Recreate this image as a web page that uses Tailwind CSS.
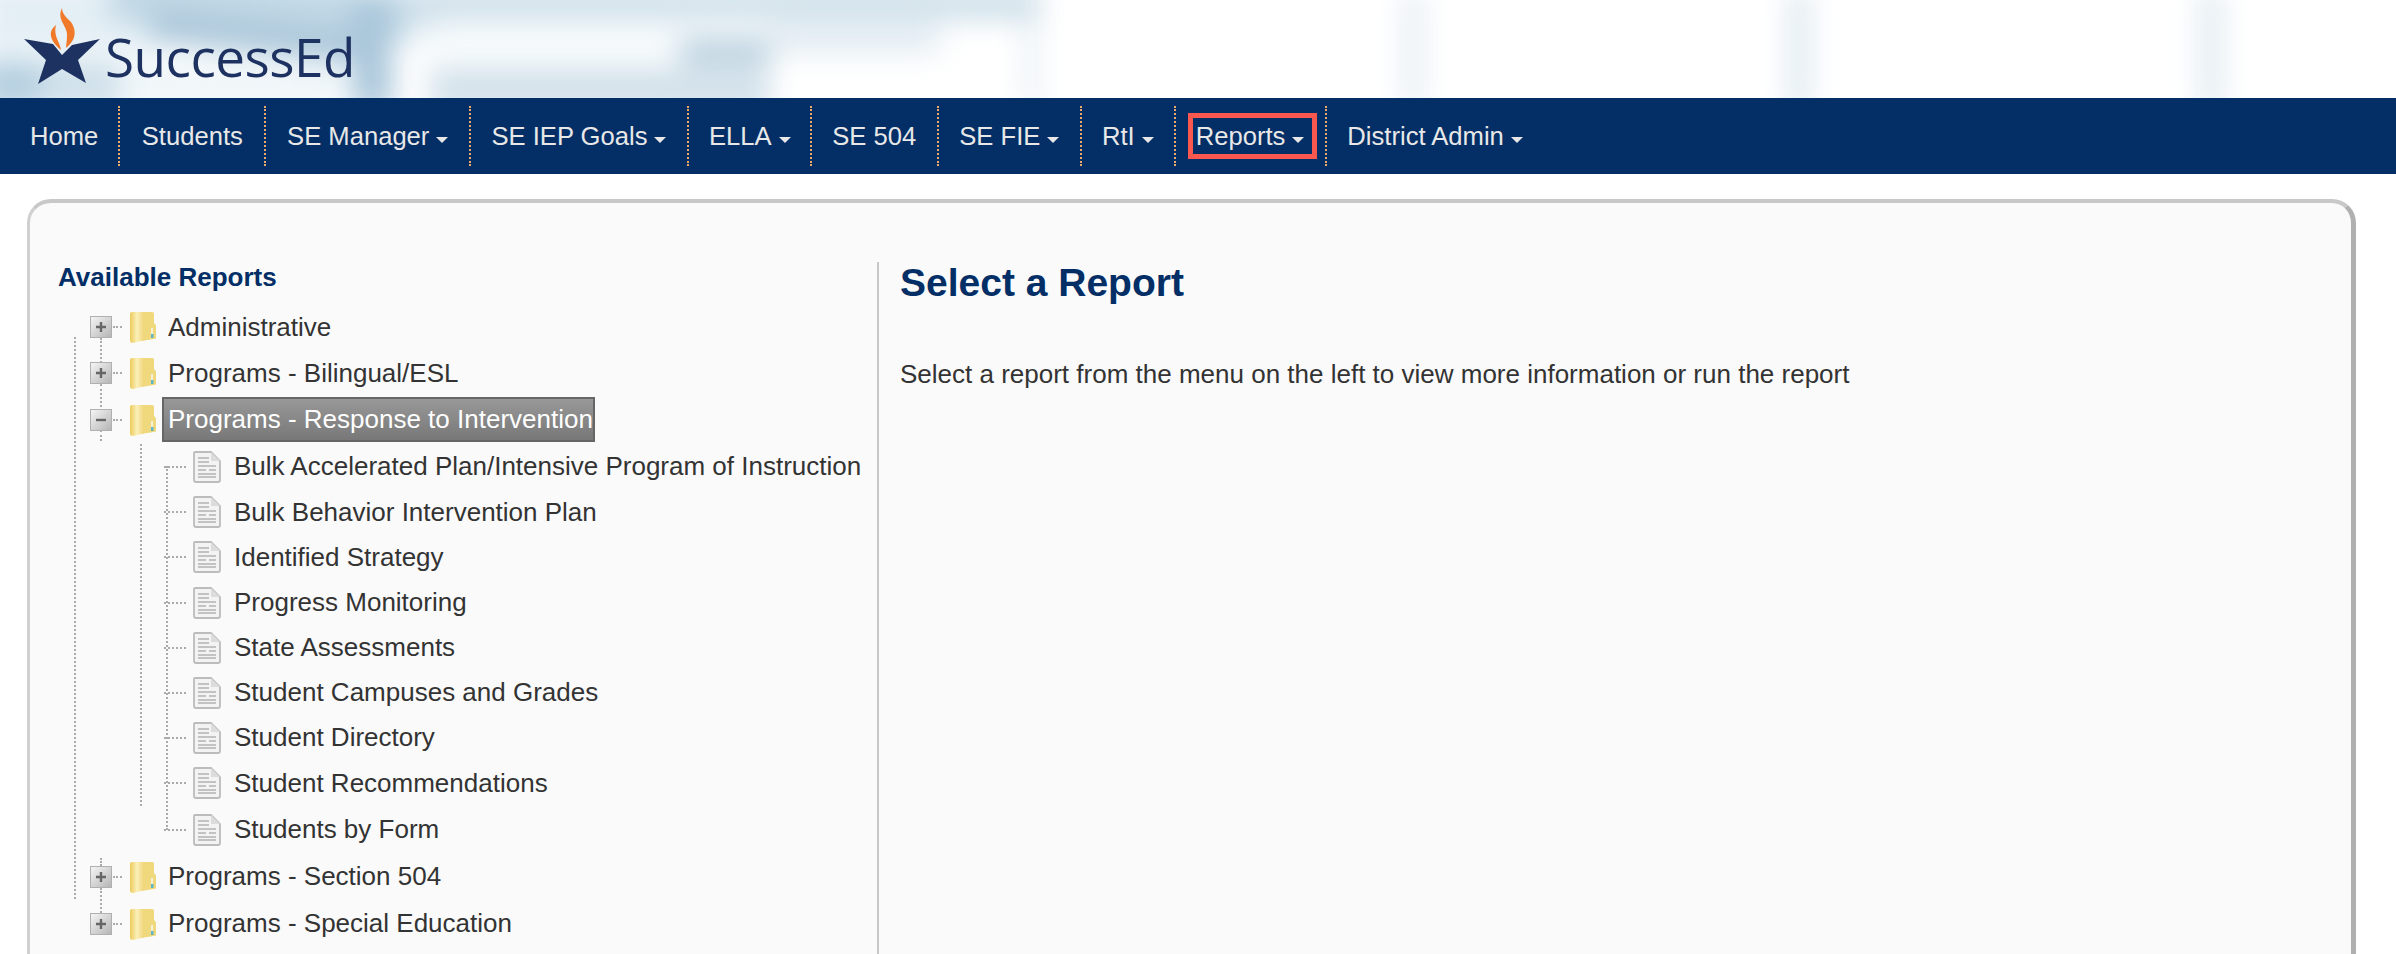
<!DOCTYPE html>
<html lang="en">
<head>
<meta charset="utf-8">
<title>SuccessEd Reports</title>
<script src="https://cdn.jsdelivr.net/npm/@tailwindcss/browser@4"></script>
</head>
<body class="h-screen overflow-hidden bg-white font-['Liberation_Sans',Arial,sans-serif] text-[#333]">
<svg width="0" height="0" class="absolute">
  <defs>
    <linearGradient id="box" x1="0" y1="0" x2="1" y2="1"><stop offset="0" stop-color="#f6f6f6"/><stop offset="1" stop-color="#b4b4b4"/></linearGradient>
    <linearGradient id="fold" x1="0" y1="0" x2="1" y2="0"><stop offset="0" stop-color="#ecca5c"/><stop offset=".5" stop-color="#fbf0b8"/><stop offset="1" stop-color="#f0d478"/></linearGradient>
    <symbol id="plus" viewBox="0 0 22 22"><rect x=".5" y=".5" width="21" height="21" fill="url(#box)" stroke="#b0b0b0"/><path d="M6 11h10M11 6v10" stroke="#666" stroke-width="2.4"/></symbol>
    <symbol id="minus" viewBox="0 0 22 22"><rect x=".5" y=".5" width="21" height="21" fill="url(#box)" stroke="#b0b0b0"/><path d="M6 11h10" stroke="#666" stroke-width="2.4"/></symbol>
    <symbol id="folder" viewBox="0 0 27 32"><path d="M12 1h11q2 0 2 2v9l1 1q1 1 1 2v12q0 1-2 1l-13 2z" fill="#f0d87c"/><path d="M1 3q0-2 2-2h9q3 1 3 5v22q0 2-3 2l-8 2q-3 0-3-3z" fill="url(#fold)"/><rect x="22" y="17" width="2" height="6" fill="#f5f0d8"/><rect x="22" y="23" width="2.5" height="4" fill="#62b4c8"/></symbol>
    <symbol id="doc" viewBox="0 0 28 32"><path d="M2 1h16l9 9v19q0 2-2 2H3q-2 0-2-2V2q0-1 1-1z" fill="#f3f3f3" stroke="#bcbcbc" stroke-width="1.8"/><path d="M18 1v9h9z" fill="#dcdcdc"/><path d="M5 7h11M5 11h11M5 15h18M5 19h8M16 19h7M5 23h18M5 26h18" stroke="#c2c2c2" stroke-width="2"/></symbol>
  </defs>
</svg>

<header class="relative h-[98px] overflow-hidden bg-white">
  <div class="absolute inset-0 blur-[14px]">
    <div class="absolute left-[-20px] top-[-20px] h-[70px] w-[180px] bg-[#e4eff5]"></div>
    <div class="absolute left-[110px] top-[-20px] h-[52px] w-[330px] rotate-[4deg] bg-[#c0d7e5]"></div>
    <div class="absolute left-[150px] top-[26px] h-[26px] w-[230px] rotate-[6deg] bg-[#a6c3d7]"></div>
    <div class="absolute left-[-20px] top-[60px] h-[50px] w-[60px] bg-[#b4cfe0]"></div>
    <div class="absolute left-[40px] top-[60px] h-[50px] w-[90px] bg-[#cfe0ea]"></div>
    <div class="absolute left-[120px] top-[60px] h-[50px] w-[220px] bg-[#f0f6f9]"></div>
    <div class="absolute left-[352px] top-[0px] h-[110px] w-[40px] bg-[#a9c6da]"></div>
    <div class="absolute left-[400px] top-[-14px] h-[34px] w-[640px] bg-[#cfe0ea]"></div>
    <div class="absolute left-[410px] top-[24px] h-[36px] w-[280px] bg-[#f6fafc]"></div>
    <div class="absolute left-[430px] top-[68px] h-[44px] w-[340px] bg-[#d2e1ea]"></div>
    <div class="absolute left-[680px] top-[38px] h-[26px] w-[90px] bg-[#b8cfde]"></div>
    <div class="absolute left-[770px] top-[24px] h-[30px] w-[170px] bg-[#e4edf3]"></div>
    <div class="absolute left-[1024px] top-[20px] h-[90px] w-[14px] bg-[#e6eef3]"></div>
    <div class="absolute left-[1404px] top-[-10px] h-[120px] w-[18px] bg-[#e2ebf2]"></div>
    <div class="absolute left-[1790px] top-[-10px] h-[120px] w-[18px] bg-[#d6e4ec]"></div>
    <div class="absolute left-[2202px] top-[-10px] h-[120px] w-[18px] bg-[#d8e5ed]"></div>
  </div>
  <div class="relative flex h-full items-start">
    <svg class="ml-[20px] mt-[6px] h-[84px] w-[84px] shrink-0 blur-[0.4px]" viewBox="20 8 84 84">
      <path d="M24 41 53 46 62 57 72 47 100 41 78 62 86 85 62 71 38 86 46 62Z" fill="#1e3262"/>
      <path d="M56 27C48 33 49 42 61 52 60 44 53 38 56 27Z" fill="#f07a2a"/>
      <path d="M62 10C56 22 68 28 67 38 67 43 66 47 66 50 76 42 77 33 71 24 67 20 62 16 62 10Z" fill="#f07a2a"/>
    </svg>
    <span class="ml-[1px] mt-[26px] font-['Open_Sans',sans-serif] text-[53px] leading-[62px] tracking-[-0.5px] text-[#1e3262] blur-[0.6px]">SuccessEd</span>
  </div>
</header>

<nav class="flex h-[76px] items-center bg-[#032e66] pl-[10px] text-[25.6px] text-[#e8e8e8]">
  <a class="flex h-[60px] items-center border-r-2 border-dotted border-[#f0a868] pl-[20px] pr-[20px]">Home</a>
  <a class="flex h-[60px] items-center border-r-2 border-dotted border-[#f0a868] px-[21.5px]">Students</a>
  <a class="flex h-[60px] items-center gap-[7px] border-r-2 border-dotted border-[#f0a868] pl-[20.8px] pr-[20.8px]">SE Manager <span class="mt-[8px] h-0 w-0 border-x-[6px] border-t-[6px] border-x-transparent border-t-[#e8e8e8]"></span></a>
  <a class="flex h-[60px] items-center gap-[7px] border-r-2 border-dotted border-[#f0a868] pl-[20.3px] pr-[20.3px]">SE IEP Goals <span class="mt-[8px] h-0 w-0 border-x-[6px] border-t-[6px] border-x-transparent border-t-[#e8e8e8]"></span></a>
  <a class="flex h-[60px] items-center gap-[7px] border-r-2 border-dotted border-[#f0a868] pl-[20.2px] pr-[19.2px]">ELLA <span class="mt-[8px] h-0 w-0 border-x-[6px] border-t-[6px] border-x-transparent border-t-[#e8e8e8]"></span></a>
  <a class="flex h-[60px] items-center border-r-2 border-dotted border-[#f0a868] px-[20.5px]">SE 504</a>
  <a class="flex h-[60px] items-center gap-[7px] border-r-2 border-dotted border-[#f0a868] pl-[20.5px] pr-[20.5px]">SE FIE <span class="mt-[8px] h-0 w-0 border-x-[6px] border-t-[6px] border-x-transparent border-t-[#e8e8e8]"></span></a>
  <a class="flex h-[60px] items-center gap-[7px] border-r-2 border-dotted border-[#f0a868] pl-[20.1px] pr-[20.1px]">RtI <span class="mt-[8px] h-0 w-0 border-x-[6px] border-t-[6px] border-x-transparent border-t-[#e8e8e8]"></span></a>
  <div class="flex h-[60px] items-center border-r-2 border-dotted border-[#f0a868] pl-[12px] pr-[8px]">
    <a class="flex h-[46px] items-center gap-[7px] border-[5px] border-[#f9584f] pl-[3px] pr-[8px]">Reports <span class="mt-[8px] h-0 w-0 border-x-[6px] border-t-[6px] border-x-transparent border-t-[#e8e8e8]"></span></a>
  </div>
  <a class="flex h-[60px] items-center gap-[7px] px-[20px]">District Admin <span class="mt-[8px] h-0 w-0 border-x-[6px] border-t-[6px] border-x-transparent border-t-[#e8e8e8]"></span></a>
</nav>

<main class="ml-[27px] mt-[25px] flex h-[800px] w-[2329px] rounded-[24px] border-t-[4px] border-r-[5px] border-l-[3px] border-t-[#c8c8c8] border-r-[#b0b0b0] border-l-[#d0d0d0] bg-[#fafafa] pt-[59px]">
  <section class="h-full w-[849px] shrink-0 border-r-2 border-[#c8c8c8] pl-[28px]">
    <h2 class="h-[42px] text-[26px] leading-[30px] font-bold text-[#032e66]">Available Reports</h2>
    <div class="relative text-[26px]">
      <!-- tree connector lines -->
      <span class="absolute left-[16px] top-[33px] h-[562px] border-l-2 border-dotted border-[#aaa]"></span>
      <span class="absolute left-[42px] top-[34px] h-[25px] border-l-2 border-dotted border-[#aaa]"></span>
      <span class="absolute left-[42px] top-[80px] h-[23px] border-l-2 border-dotted border-[#aaa]"></span>
      <span class="absolute left-[42px] top-[126px] h-[11px] border-l-2 border-dotted border-[#aaa]"></span>
      <span class="absolute left-[82px] top-[140px] h-[362px] border-l-2 border-dotted border-[#aaa]"></span>
      <span class="absolute left-[108px] top-[162px] h-[364px] border-l-2 border-dotted border-[#aaa]"></span>
      <span class="absolute left-[42px] top-[554px] h-[8px] border-l-2 border-dotted border-[#aaa]"></span>
      <span class="absolute left-[42px] top-[584px] h-[25px] border-l-2 border-dotted border-[#aaa]"></span>

      <div class="flex h-[46px] items-center pl-[32px]"><svg class="h-[22px] w-[22px] blur-[0.3px]"><use href="#plus"/></svg><span class="ml-[1px] w-[9px] border-t-2 border-dotted border-[#aaa]"></span><svg class="ml-[7px] h-[32px] w-[27px] blur-[0.4px]"><use href="#folder"/></svg><span class="ml-[12px]">Administrative</span></div>
      <div class="flex h-[46px] items-center pl-[32px]"><svg class="h-[22px] w-[22px] blur-[0.3px]"><use href="#plus"/></svg><span class="ml-[1px] w-[9px] border-t-2 border-dotted border-[#aaa]"></span><svg class="ml-[7px] h-[32px] w-[27px] blur-[0.4px]"><use href="#folder"/></svg><span class="ml-[12px]">Programs - Bilingual/ESL</span></div>
      <div class="flex h-[47px] items-center pl-[32px]"><svg class="h-[22px] w-[22px] blur-[0.3px]"><use href="#minus"/></svg><span class="ml-[1px] w-[9px] border-t-2 border-dotted border-[#aaa]"></span><svg class="ml-[7px] h-[32px] w-[27px] blur-[0.4px]"><use href="#folder"/></svg><span class="ml-[6px] flex h-[45px] w-[433px] items-center whitespace-nowrap border-2 border-[#666] bg-linear-to-b from-[#989898] to-[#787878] pl-[4px] text-white">Programs - Response to Intervention</span></div>

      <div class="flex h-[47px] items-center pl-[106px]"><span class="w-[22px] border-t-2 border-dotted border-[#aaa]"></span><svg class="ml-[7px] h-[32px] w-[28px] blur-[0.4px]"><use href="#doc"/></svg><span class="ml-[13px]">Bulk Accelerated Plan/Intensive Program of Instruction</span></div>
      <div class="flex h-[44px] items-center pl-[106px]"><span class="w-[22px] border-t-2 border-dotted border-[#aaa]"></span><svg class="ml-[7px] h-[32px] w-[28px] blur-[0.4px]"><use href="#doc"/></svg><span class="ml-[13px]">Bulk Behavior Intervention Plan</span></div>
      <div class="flex h-[46px] items-center pl-[106px]"><span class="w-[22px] border-t-2 border-dotted border-[#aaa]"></span><svg class="ml-[7px] h-[32px] w-[28px] blur-[0.4px]"><use href="#doc"/></svg><span class="ml-[13px]">Identified Strategy</span></div>
      <div class="flex h-[45px] items-center pl-[106px]"><span class="w-[22px] border-t-2 border-dotted border-[#aaa]"></span><svg class="ml-[7px] h-[32px] w-[28px] blur-[0.4px]"><use href="#doc"/></svg><span class="ml-[13px]">Progress Monitoring</span></div>
      <div class="flex h-[45px] items-center pl-[106px]"><span class="w-[22px] border-t-2 border-dotted border-[#aaa]"></span><svg class="ml-[7px] h-[32px] w-[28px] blur-[0.4px]"><use href="#doc"/></svg><span class="ml-[13px]">State Assessments</span></div>
      <div class="flex h-[45px] items-center pl-[106px]"><span class="w-[22px] border-t-2 border-dotted border-[#aaa]"></span><svg class="ml-[7px] h-[32px] w-[28px] blur-[0.4px]"><use href="#doc"/></svg><span class="ml-[13px]">Student Campuses and Grades</span></div>
      <div class="flex h-[45px] items-center pl-[106px]"><span class="w-[22px] border-t-2 border-dotted border-[#aaa]"></span><svg class="ml-[7px] h-[32px] w-[28px] blur-[0.4px]"><use href="#doc"/></svg><span class="ml-[13px]">Student Directory</span></div>
      <div class="flex h-[46px] items-center pl-[106px]"><span class="w-[22px] border-t-2 border-dotted border-[#aaa]"></span><svg class="ml-[7px] h-[32px] w-[28px] blur-[0.4px]"><use href="#doc"/></svg><span class="ml-[13px]">Student Recommendations</span></div>
      <div class="flex h-[47px] items-center pl-[106px]"><span class="w-[22px] border-t-2 border-dotted border-[#aaa]"></span><svg class="ml-[7px] h-[32px] w-[28px] blur-[0.4px]"><use href="#doc"/></svg><span class="ml-[13px]">Students by Form</span></div>

      <div class="flex h-[47px] items-center pl-[32px]"><svg class="h-[22px] w-[22px] blur-[0.3px]"><use href="#plus"/></svg><span class="ml-[1px] w-[9px] border-t-2 border-dotted border-[#aaa]"></span><svg class="ml-[7px] h-[32px] w-[27px] blur-[0.4px]"><use href="#folder"/></svg><span class="ml-[12px]">Programs - Section 504</span></div>
      <div class="flex h-[47px] items-center pl-[32px]"><svg class="h-[22px] w-[22px] blur-[0.3px]"><use href="#plus"/></svg><span class="ml-[1px] w-[9px] border-t-2 border-dotted border-[#aaa]"></span><svg class="ml-[7px] h-[32px] w-[27px] blur-[0.4px]"><use href="#folder"/></svg><span class="ml-[12px]">Programs - Special Education</span></div>
    </div>
  </section>
  <section class="flex-1 pl-[21px]">
    <h1 class="text-[39px] leading-[42px] font-bold text-[#032e66]">Select a Report</h1>
    <p class="mt-[55px] text-[26px] leading-[30px]">Select a report from the menu on the left to view more information or run the report</p>
  </section>
</main>
</body>
</html>
